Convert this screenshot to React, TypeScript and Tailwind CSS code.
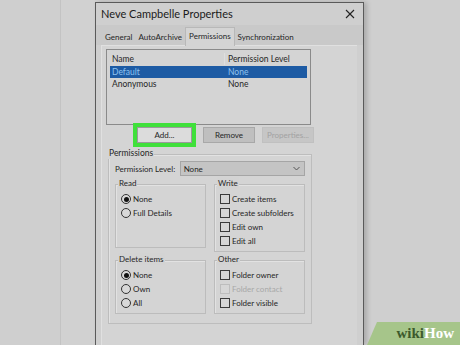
const font = "font-['Lato','Noto_Sans',sans-serif]";

function Radio({ label, checked }: { label: string; checked?: boolean }) {
  return (
    <div className="flex h-[14px] items-center gap-[2px] whitespace-nowrap">
      <span className="flex h-[10px] w-[10px] shrink-0 items-center justify-center rounded-full border border-[#333] bg-[#d8d8d8]">
        {checked && <span className="h-[5px] w-[5px] rounded-full bg-[#111]" />}
      </span>
      <span>{label}</span>
    </div>
  );
}

function Check({ label, disabled }: { label: string; disabled?: boolean }) {
  return (
    <div className={`flex h-[14px] items-center gap-[2px] whitespace-nowrap ${disabled ? "text-[#a8a8a8]" : ""}`}>
      <span
        className={`h-[10px] w-[10px] shrink-0 border bg-[#d6d6d6] ${disabled ? "border-[#bdbdbd]" : "border-[#3a3a3a]"}`}
      />
      <span>{label}</span>
    </div>
  );
}

function Group({ title, children }: { title: string; children: React.ReactNode }) {
  return (
    <div className="relative w-[91px] pt-[5px]">
      <div className="border border-[#bcbcbc] pl-[5px] pt-[7px] pb-[3px] shadow-[inset_1px_1px_0_#e2e2e2]">
        {children}
      </div>
      <span className="absolute left-[3px] top-[-2px] bg-[#d3d3d3] px-[1px] leading-[12px]">{title}</span>
    </div>
  );
}

export default function App() {
  return (
    <div className={`relative flex h-[345px] w-[460px] overflow-hidden bg-[#cfcfcf] text-[8px] text-[#262626] ${font}`}>
      <div className="w-[60px] shrink-0" />
      <div className="w-[35px] shrink-0 border-l border-[#c3c3c3] bg-[#d1d1d1]" />

      {/* dialog */}
      <div className="mt-[2px] flex w-[269px] shrink-0 flex-col border border-b-0 border-[#5a5a5a] bg-[#cfcfcf] shadow-[3px_0_5px_rgba(0,0,0,0.18)]">
        <div className="flex h-[22px] items-center justify-between pl-[5px] pr-[8px] text-[11px] text-[#1a1a1a]">
          <span>Neve Campbelle Properties</span>
          <svg width="10" height="10" viewBox="0 0 10 10" stroke="#222" strokeWidth="1.1">
            <line x1="1" y1="1" x2="9" y2="9" />
            <line x1="9" y1="1" x2="1" y2="9" />
          </svg>
        </div>

        <div className="flex h-[20px] items-end whitespace-nowrap bg-[#c9c9c9] pl-[6px] text-[8px]">
          <div className="flex h-[16px] items-center px-[3px]">General</div>
          <div className="flex h-[16px] items-center px-[3px]">AutoArchive</div>
          <div className="relative top-[1px] flex h-[19px] items-start border border-b-0 border-[#b8b8b8] bg-[#d4d4d4] px-[3px] pt-[2px]">
            Permissions
          </div>
          <div className="flex h-[16px] items-center px-[3px]">Synchronization</div>
        </div>

        <div className="ml-[5px] mr-[6px] flex-1 border-l border-t border-[#e0e0e0] bg-[#d4d4d4]">
          {/* list */}
          <div className="ml-[4px] mt-[3px] h-[76px] w-[205px] border border-[#8a8a8a] bg-[#d4d4d4] px-[3px] pt-[2px] text-[8.5px]">
            <div className="flex h-[14px] items-center">
              <span className="w-[115px] border-r border-[#dedede] pl-[2px]">Name</span>
              <span className="pl-[3px]">Permission Level</span>
            </div>
            <div className="flex h-[12px] items-center bg-[#1d5ba4] text-[#8ec2f0]">
              <span className="w-[115px] pl-[2px]">Default</span>
              <span className="pl-[3px]">None</span>
            </div>
            <div className="flex h-[13px] items-center">
              <span className="w-[115px] pl-[2px]">Anonymous</span>
              <span className="pl-[3px]">None</span>
            </div>
          </div>

          {/* buttons */}
          <div className="ml-[31px] mt-[-2px] flex items-center gap-[7px]">
            <div className="border-[4px] border-[#3fe03a]">
              <div className="flex h-[16px] w-[55px] items-center justify-center border border-[#9a9a9a] bg-[#dcdcdc]">
                Add...
              </div>
            </div>
            <div className="flex h-[16px] w-[52px] items-center justify-center border border-[#a8a8a8] bg-[#bfbfbf]">
              Remove
            </div>
            <div className="flex h-[16px] w-[52px] items-center justify-center border border-[#c0c0c0] bg-[#c6c6c6] text-[#a2a2a2]">
              Properties...
            </div>
          </div>

          {/* permissions group */}
          <div className="relative ml-[6px] mt-[2px] w-[204px] pt-[5px]">
            <div className="h-[170px] border border-[#bdbdbd] px-[6px] pt-[6px] shadow-[inset_1px_1px_0_#e2e2e2]">
              <div className="flex items-center whitespace-nowrap">
                <span className="w-[65px]">Permission Level:</span>
                <div className="flex h-[15px] w-[126px] items-center justify-between border border-[#a5a5a5] bg-[#c4c4c4] pl-[3px] pr-[4px]">
                  <span>None</span>
                  <svg width="7" height="5" viewBox="0 0 7 5" fill="none" stroke="#555" strokeWidth="1">
                    <polyline points="0.5,1 3.5,4 6.5,1" />
                  </svg>
                </div>
              </div>

              <div className="mt-[3px] flex gap-[8px]">
                <Group title="Read">
                  <div className="h-[52px]">
                    <Radio label="None" checked />
                    <Radio label="Full Details" />
                  </div>
                </Group>
                <Group title="Write">
                  <Check label="Create items" />
                  <Check label="Create subfolders" />
                  <Check label="Edit own" />
                  <Check label="Edit all" />
                </Group>
              </div>

              <div className="mt-[3px] flex gap-[8px]">
                <Group title="Delete items">
                  <Radio label="None" checked />
                  <Radio label="Own" />
                  <Radio label="All" />
                </Group>
                <Group title="Other">
                  <Check label="Folder owner" />
                  <Check label="Folder contact" disabled />
                  <Check label="Folder visible" />
                </Group>
              </div>
            </div>
            <span className="absolute left-[0px] top-[-2px] bg-[#d4d4d4] px-[1px] leading-[12px] text-[8.5px]">Permissions</span>
          </div>
        </div>
      </div>

      <div className="w-[8px] shrink-0" />

      {/* wikiHow badge */}
      <div className="absolute bottom-0 right-0 flex h-[23px] w-[93px] items-center justify-end bg-[#a6c58a] pr-[6px] [clip-path:polygon(10px_0,100%_0,100%_100%,0_100%)]">
        <span className="font-['Liberation_Serif',serif] text-[15px] font-bold leading-none">
          <span className="text-[#3d5a2c]">wiki</span>
          <span className="text-white">How</span>
        </span>
      </div>
    </div>
  );
}
